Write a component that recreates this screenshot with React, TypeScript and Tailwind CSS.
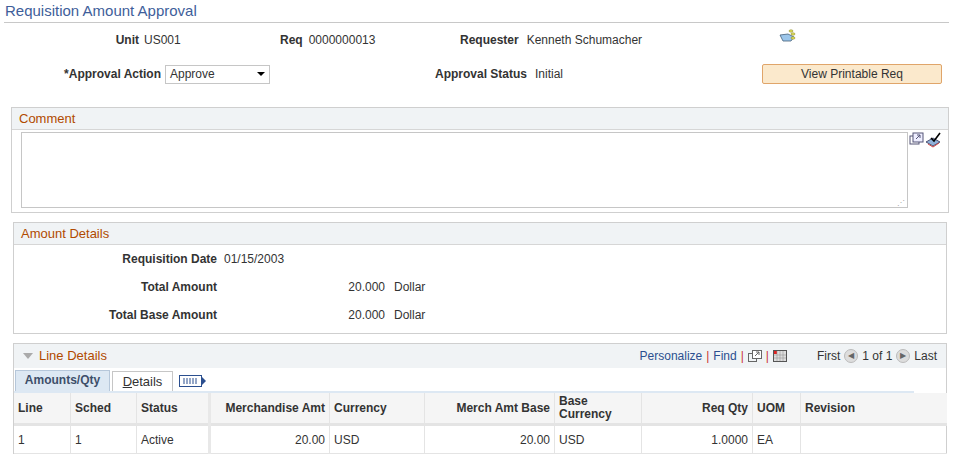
export default function App() {
  const f = { fontFamily: '"Liberation Sans", Arial, sans-serif' };
  const cols = [
    { w: 56, h: "Line", v: "1" },
    { w: 66, h: "Sched", v: "1" },
    { w: 72, h: "Status", v: "Active" },
    { w: 121, h: "Merchandise Amt", v: "20.00", r: true, sep: true },
    { w: 95, h: "Currency", v: "USD" },
    { w: 130, h: "Merch Amt Base", v: "20.00", r: true },
    { w: 87, h: "Base Currency", v: "USD", two: true },
    { w: 111, h: "Req Qty", v: "1.0000", r: true },
    { w: 48, h: "UOM", v: "EA" },
    { w: 147, h: "Revision", v: "" },
  ];
  return (
    <div style={f} className="w-[953px] h-[458px] bg-white text-[12px] text-[#333] overflow-hidden relative">
      <div className="pl-[5px] pt-[1px] text-[15px] text-[#3e5e9a] h-[22px] leading-[19px]">Requisition Amount Approval</div>
      <div className="mx-[4px] h-[1px] bg-[#c8c8c8]" />
      {/* row 1 */}
      <div className="flex items-center h-[28px] mt-[3px]">
        <div className="w-[139px] text-right font-bold">Unit</div>
        <div className="w-[141px] pl-[5px]">US001</div>
        <div className="font-bold">Req</div>
        <div className="pl-[6px] w-[126px]">0000000013</div>
        <div className="w-[90px] text-right font-bold">Requester</div>
        <div className="pl-[8px] w-[260px]">Kenneth Schumacher</div>
        <svg width="18" height="14" viewBox="0 0 18 14" className="-mt-[8px]">
          <path d="M1 6 L9 5 L15 8 L12 12 L4 12 Z" fill="#9cc6ea" stroke="#44607a" strokeWidth="0.8" />
          <ellipse cx="12" cy="2" rx="2" ry="1.2" fill="#e6e25a" stroke="#7a7a20" strokeWidth="0.5" />
          <ellipse cx="14" cy="5" rx="2" ry="1.2" fill="#e6e25a" stroke="#7a7a20" strokeWidth="0.5" />
          <ellipse cx="14" cy="9" rx="2" ry="1.2" fill="#e6e25a" stroke="#7a7a20" strokeWidth="0.5" />
        </svg>
      </div>
      {/* row 2 */}
      <div className="flex items-center h-[24px] mt-[8px]">
        <div className="w-[161px] text-right font-bold">*Approval Action</div>
        <div className="ml-[4px] w-[105px] h-[19px] border border-[#c6c6c6] flex items-center justify-between px-[4px]">
          <span>Approve</span>
          <span className="w-0 h-0 border-l-[4px] border-r-[4px] border-t-[4px] border-l-transparent border-r-transparent border-t-black" />
        </div>
        <div className="w-[257px] text-right font-bold">Approval Status</div>
        <div className="pl-[8px] w-[235px]">Initial</div>
        <div className="w-[180px] h-[20px] border border-[#e0a56a] bg-[#fbe9cc] rounded-[2px] text-center leading-[18px] text-[#333]">View Printable Req</div>
      </div>
      {/* Comment */}
      <div className="ml-[11px] mt-[21px] w-[938px] h-[106px] border border-[#cfcfcf]">
        <div className="h-[22px] bg-[#f0f3f5] border-b border-[#d6d6d6] pl-[7px] text-[13px] text-[#b14a00] leading-[21px]">Comment</div>
        <div className="flex pt-[2px]">
          <div className="ml-[9px] w-[887px] h-[76px] border border-[#c6c6c6] relative">
            <span className="absolute right-[2px] bottom-0 text-[8px] text-[#aaa] leading-[8px]">⋰</span>
          </div>
          <svg width="16" height="14" viewBox="0 0 16 14" className="ml-[1px]">
            <rect x="1" y="4" width="9" height="8" fill="none" stroke="#557" strokeWidth="1" />
            <rect x="4" y="1" width="10" height="9" fill="#eef" stroke="#557" strokeWidth="1" />
            <path d="M7 7 L11 3 M8 3 H11 V6" stroke="#557" fill="none" />
          </svg>
          <svg width="16" height="16" viewBox="0 0 16 16">
            <path d="M1 10 L8 6 L15 10 L8 14 Z" fill="#8fb0d8" stroke="#335" strokeWidth="0.8" />
            <path d="M3 12 L8 15 L14 11" stroke="#c44" fill="none" />
            <path d="M6 6 L9 9 L15 1" stroke="#000" strokeWidth="1.6" fill="none" />
          </svg>
        </div>
      </div>
      {/* Amount Details */}
      <div className="ml-[13px] mt-[9px] w-[934px] h-[112px] border border-[#cfcfcf]">
        <div className="h-[22px] bg-[#f0f3f5] border-b border-[#d6d6d6] pl-[7px] text-[13px] text-[#b14a00] leading-[21px]">Amount Details</div>
        <div className="flex h-[28px] items-center">
          <div className="w-[203px] text-right font-bold">Requisition Date</div>
          <div className="pl-[7px]">01/15/2003</div>
        </div>
        <div className="flex h-[28px] items-center">
          <div className="w-[203px] text-right font-bold">Total Amount</div>
          <div className="w-[168px] text-right">20.000</div>
          <div className="pl-[9px]">Dollar</div>
        </div>
        <div className="flex h-[28px] items-center">
          <div className="w-[203px] text-right font-bold">Total Base Amount</div>
          <div className="w-[168px] text-right">20.000</div>
          <div className="pl-[9px]">Dollar</div>
        </div>
      </div>
      {/* Line Details */}
      <div className="ml-[13px] mt-[9px] w-[934px] border border-[#cfcfcf] border-b-0">
        <div className="h-[24px] bg-[#f0f3f5] flex items-center pl-[9px]">
          <span className="w-0 h-0 border-l-[5px] border-r-[5px] border-t-[6px] border-l-transparent border-r-transparent border-t-[#aaa] mr-[6px]" />
          <span className="text-[13px] text-[#b14a00]">Line Details</span>
          <div className="ml-auto flex items-center text-[#2b4f8f] pr-[9px]">
            <span>Personalize</span><span className="text-[#c33] mx-[4px]">|</span>
            <span>Find</span><span className="text-[#c33] mx-[4px]">|</span>
            <svg width="14" height="12" viewBox="0 0 14 12"><rect x="0.5" y="3.5" width="8" height="8" fill="none" stroke="#666" /><rect x="4.5" y="0.5" width="9" height="8" fill="#fff" stroke="#666" /><path d="M7 6 L11 2 M8 2 H11 V5" stroke="#666" fill="none" /></svg>
            <span className="text-[#c33] mx-[4px]">|</span>
            <svg width="14" height="12" viewBox="0 0 14 12"><rect x="0.5" y="0.5" width="13" height="11" fill="#ddd" stroke="#555" /><rect x="1" y="1" width="3" height="3" fill="#d22" /><path d="M1 5 H13 M1 8 H13 M4 1 V11 M7 1 V11 M10 1 V11" stroke="#999" strokeWidth="0.6" /></svg>
            <span className="ml-[30px] text-[#333]">First</span>
            <span className="mx-[4px] w-[14px] h-[14px] rounded-full bg-[#ddd] border border-[#bbb] text-[8px] text-[#666] flex items-center justify-center">◀</span>
            <span className="text-[#333]">1 of 1</span>
            <span className="mx-[4px] w-[14px] h-[14px] rounded-full bg-[#ddd] border border-[#bbb] text-[8px] text-[#666] flex items-center justify-center">▶</span>
            <span className="text-[#333]">Last</span>
          </div>
        </div>
        <div className="h-[23px] flex items-end pl-[1px]">
          <div className="w-[95px] h-[21px] bg-[#dde8f3] border border-[#b6c7da] border-b-0 font-bold text-[#3d4f6a] text-center leading-[19px]">Amounts/Qty</div>
          <div className="ml-[2px] w-[61px] h-[20px] border border-[#c6c6c6] border-b-0 text-center leading-[19px] text-[13px]"><u>D</u>etails</div>
          <svg width="28" height="12" viewBox="0 0 28 12" className="ml-[6px] mb-[4px]">
            <rect x="0.5" y="0.5" width="22" height="11" fill="#fff" stroke="#2b4f8f" />
            <path d="M4 4 H19 M4 6 H19 M4 8 H19" stroke="#2b4f8f" strokeDasharray="2 1" />
            <path d="M23 2 L27 6 L23 10 Z" fill="#2b4f8f" />
          </svg>
        </div>
        <div className="h-[2px] bg-[#dde8f3] w-[900px]" />
        <div className="flex">
          {cols.map((c, i) => (
            <div key={i} style={{ width: c.w }} className={`shrink-0 ${c.sep ? "border-l-[3px] border-l-[#e8e8e8]" : i ? "border-l border-l-[#e4e4e4]" : ""}`}>
              <div className={`h-[33px] bg-[#f5f5f5] border-b-[3px] border-[#e4e4e4] font-bold text-[#333] flex items-center px-[4px] leading-[13px] ${c.r ? "justify-end" : ""}`}>
                {c.two ? <span>Base<br />Currency</span> : c.h}
              </div>
              <div className={`h-[28px] flex items-center px-[4px] ${c.r ? "justify-end" : ""} border-b border-[#e4e4e4]`}>{c.v}</div>
            </div>
          ))}
        </div>
      </div>
    </div>
  );
}
